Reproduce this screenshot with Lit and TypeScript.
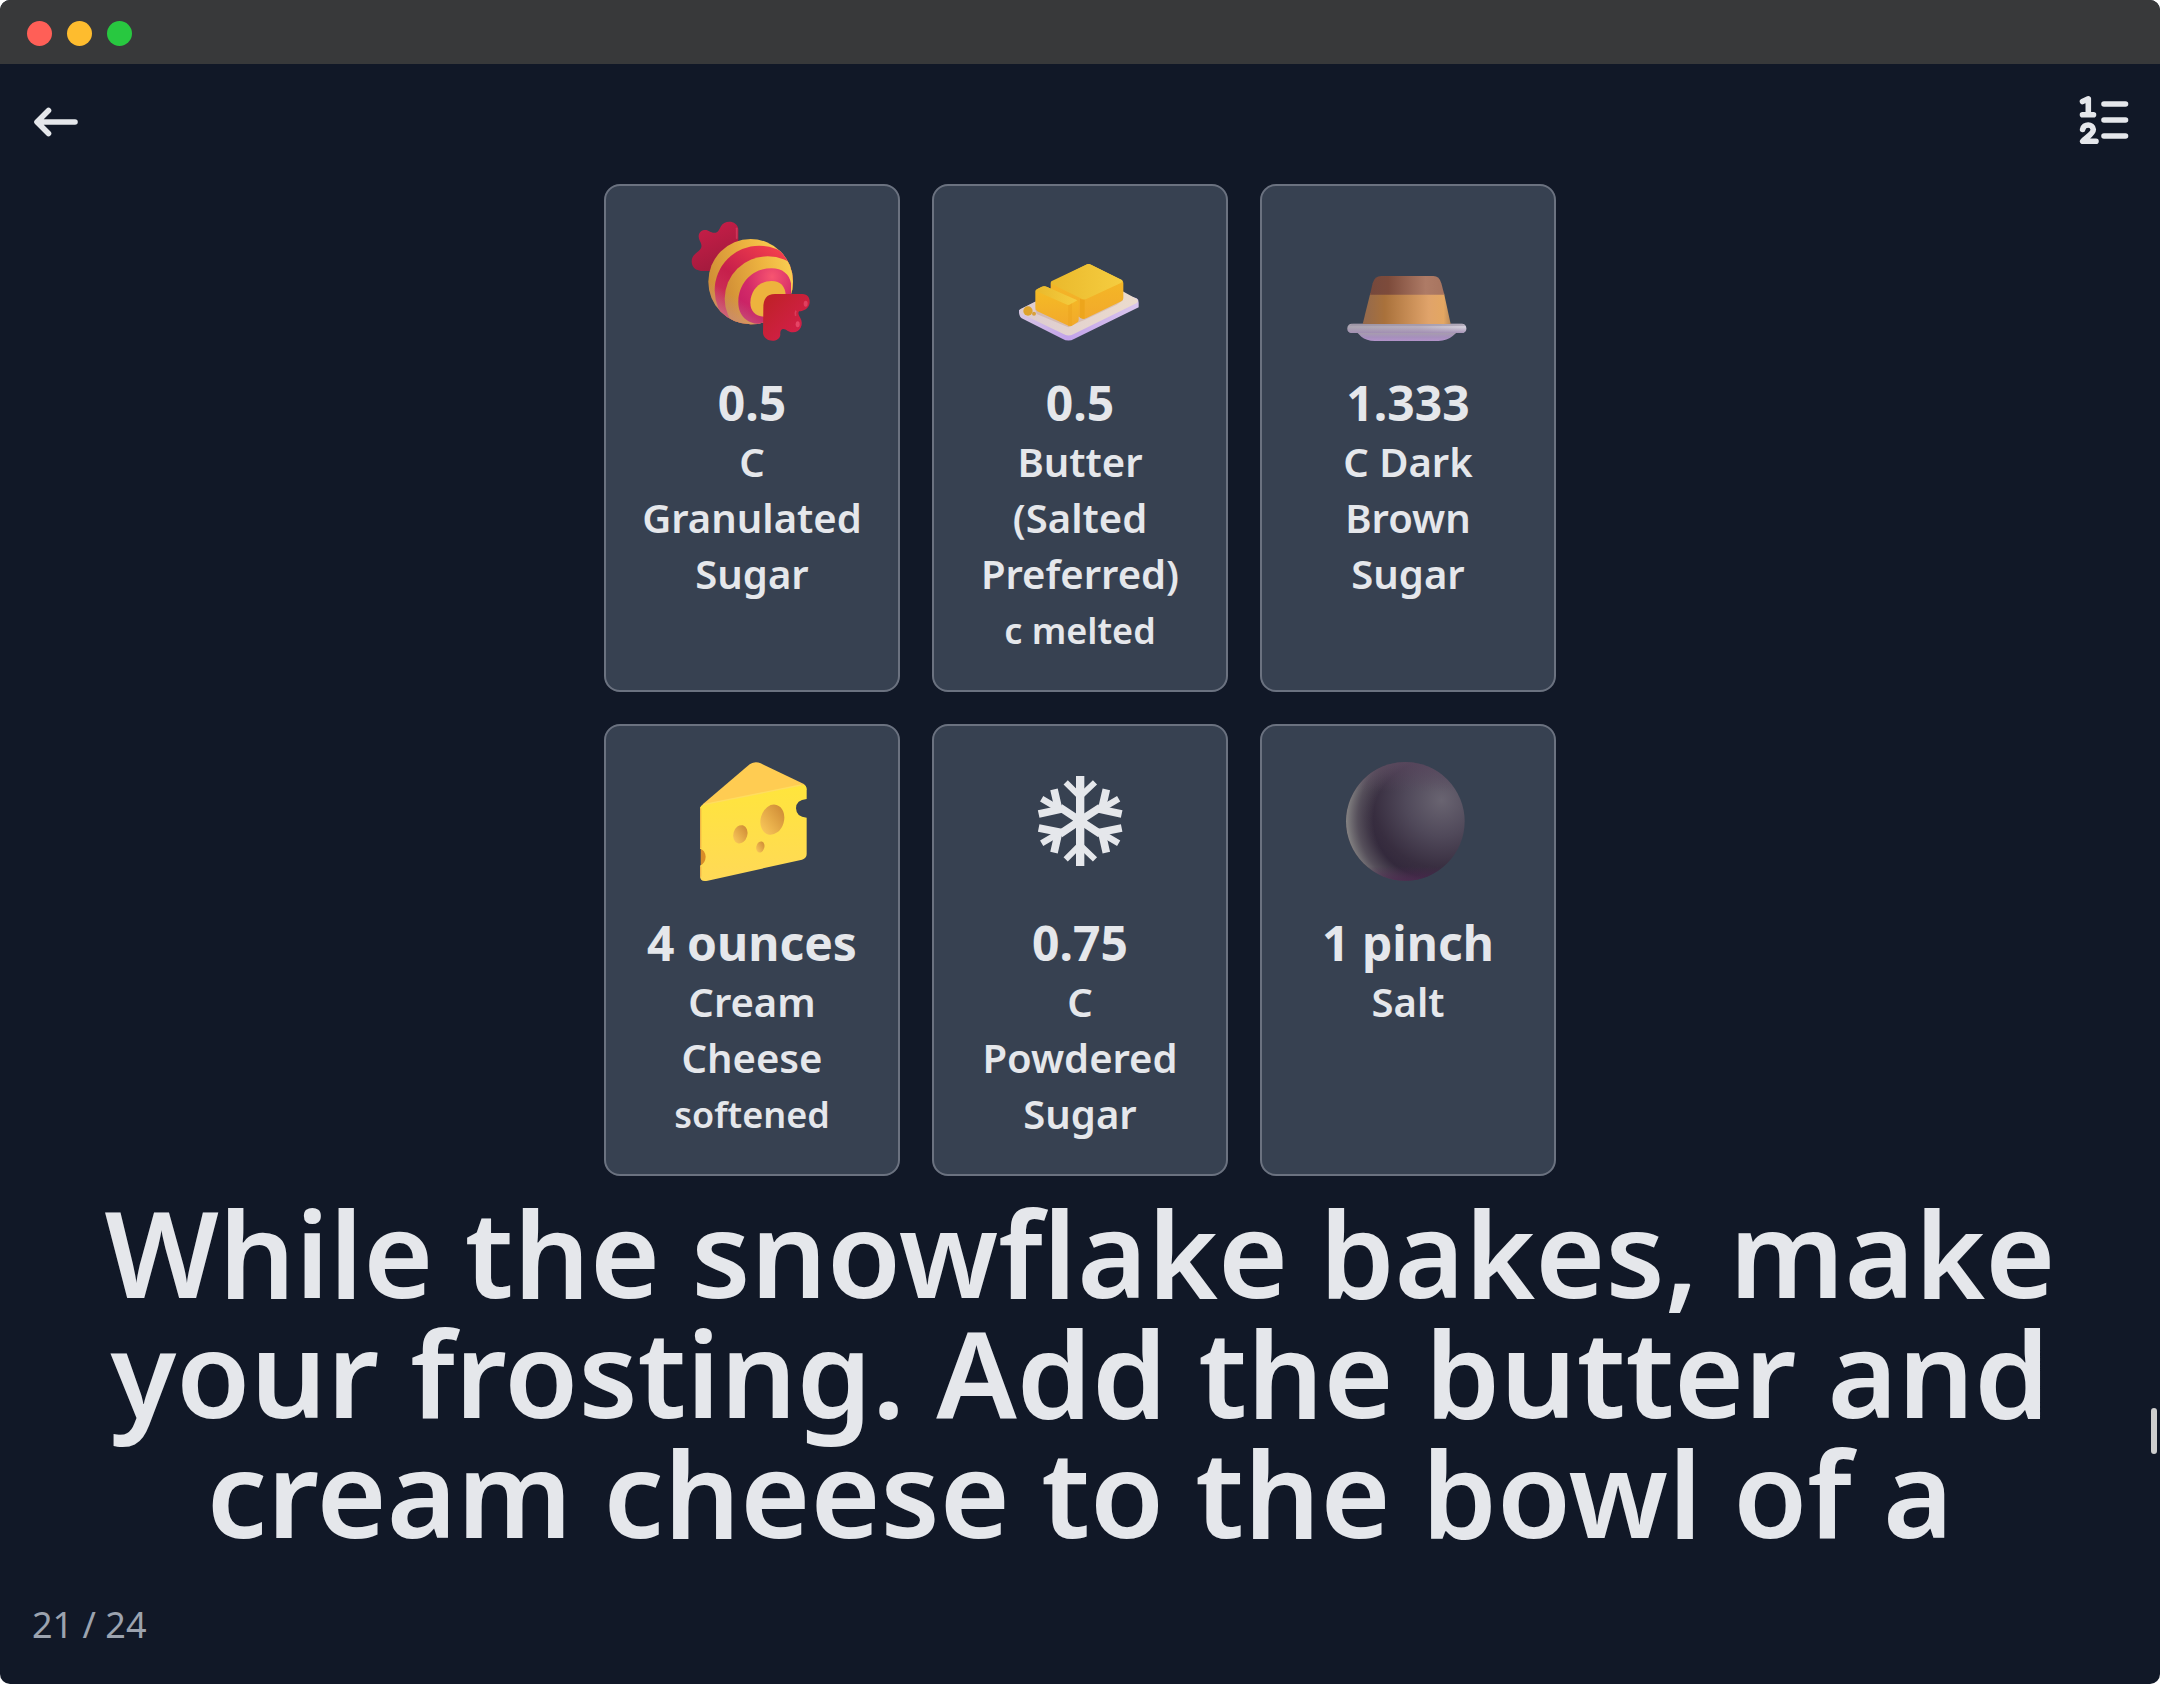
import { html, svg, css, LitElement, TemplateResult, nothing } from 'lit';
import { customElement, property, state } from 'lit/decorators.js';

interface Ingredient {
	icon: string;
	amount: string;
	name: string;
	note?: string;
}

const candy = svg`
	<svg viewBox="66 66 360 360">
		<defs>
			<clipPath id="ball"><ellipse cx="242" cy="245" rx="127" ry="128"/></clipPath>
			<linearGradient id="yellow" x1="0" y1=".5" x2="1" y2=".3">
				<stop offset="0" stop-color="#cf8c36"/><stop offset=".5" stop-color="#eeb440"/><stop offset="1" stop-color="#ffdb5a"/>
			</linearGradient>
			<linearGradient id="red" x1="0" y1="1" x2=".7" y2="0">
				<stop offset="0" stop-color="#d64467"/><stop offset=".55" stop-color="#c61f4b"/><stop offset="1" stop-color="#f5404d"/>
			</linearGradient>
			<radialGradient id="pink" cx=".64" cy=".15" r=".8">
				<stop offset="0" stop-color="#f75570"/><stop offset=".6" stop-color="#d32a68"/><stop offset="1" stop-color="#c72065"/>
			</radialGradient>
			<linearGradient id="tail" x1=".3" y1="0" x2=".7" y2="1">
				<stop offset="0" stop-color="#c81e48"/><stop offset="1" stop-color="#9f1a3c"/>
			</linearGradient>
			<linearGradient id="wrap" x1=".1" y1=".1" x2="1" y2="1">
				<stop offset="0" stop-color="#c02129"/><stop offset="1" stop-color="#d81f52"/>
			</linearGradient>
			<linearGradient id="shade" x1=".2" y1="1" x2=".5" y2=".5">
				<stop offset="0" stop-color="#c88c93" stop-opacity=".75"/><stop offset=".6" stop-color="#c88c93" stop-opacity="0"/>
			</linearGradient>
		</defs>
		<path fill="url(#tail)" d="M205 125V88C202 60 163 58 152 80C147 90 144 98 134 98C121 99 116 88 103 90C86 93 82 110 90 124C97 137 96 144 86 153C72 164 62 172 66 192C70 207 84 213 98 213H125Z"/>
		<path stroke="#e04468" stroke-width="5" stroke-linecap="round" opacity=".6" d="M200 85V115"/>
		<g clip-path="url(#ball)">
			<rect x="110" y="110" width="270" height="270" fill="url(#yellow)"/>
			<circle cx="268" cy="271" r="134" fill="url(#red)"/>
			<ellipse cx="293" cy="296" rx="129" ry="127" fill="url(#yellow)"/>
			<path fill="url(#pink)" d="M205 303C207 246 250 205 304 205C338 205 358 223 363 250V300L290 372C238 378 203 352 205 303Z"/>
			<path fill="#edb33d" d="M241 308C242 270 268 243 305 243C332 243 346 260 347 285L285 350C256 350 241 333 241 308Z"/>
			<rect x="110" y="110" width="270" height="270" fill="url(#shade)"/>
		</g>
		<path fill="url(#wrap)" d="M280 325C280 297 289 282 315 282H395C412 281 420 292 419 308C417 326 401 333 387 334C383 340 386 346 391 354C402 373 391 397 369 397C353 397 349 386 339 387C331 389 331 396 331 404C328 430 283 428 279 400Z"/>
		<ellipse cx="407" cy="311" rx="6" ry="9" fill="#ef5575" opacity=".6"/>
		<ellipse cx="383" cy="373" rx="6" ry="9" fill="#ef5575" opacity=".7"/>
		<path d="M378 332Q374 340 377 348" stroke="#ea5574" stroke-width="5" opacity=".5" fill="none"/>
	</svg>`;

const butter = svg`
	<svg viewBox="60 -54 360 360">
		<defs>
			<linearGradient id="rim" x1="0" y1="0" x2="1" y2="0">
				<stop offset="0" stop-color="#d8c8e4"/><stop offset=".4" stop-color="#c2a2ea"/><stop offset="1" stop-color="#d9c6ec"/>
			</linearGradient>
			<linearGradient id="plate" x1="0" y1="0" x2="1" y2="0">
				<stop offset="0" stop-color="#dccbd0"/><stop offset="1" stop-color="#ecdccd"/>
			</linearGradient>
			<linearGradient id="side" x1="0" y1="0" x2="0" y2="1">
				<stop offset="0" stop-color="#f5bd24"/><stop offset="1" stop-color="#f2a92b"/>
			</linearGradient>
			<linearGradient id="top" x1="0" y1="0" x2="1" y2="0">
				<stop offset="0" stop-color="#eab92c"/><stop offset="1" stop-color="#f5cd40"/>
			</linearGradient>
		</defs>
		<path fill="url(#rim)" d="M57 210L240 120L410 175Q416 178 416 188V202L222 297Q205 307 187 296L65 235Q56 228 57 210Z"/>
		<path fill="url(#plate)" d="M62 207L105 185L368 154L410 177Q418 184 409 190L220 283Q206 290 192 283L64 221Q56 214 62 207Z"/>
		<path fill="#b98a72" opacity=".3" d="M105 206L110 222L205 262L240 245L255 239L350 194L370 180Z"/>
		<path fill="url(#side)" d="M152 128L262 73Q267 70 273 74L366 121Q370 124 370 130V175Q370 181 364 184L260 234Q251 238 242 233L152 190Z"/>
		<path fill="url(#top)" d="M154 124L261 73Q267 70 273 74L366 120Q370 124 364 128L259 177Q252 180 245 176L155 132Q150 128 154 124Z"/>
		<path fill="#eda51c" d="M240 176Q247 180 254 179V237Q247 237 240 233Z"/>
		<path fill="url(#side)" d="M106 152Q108 147 125 140Q132 136 143 142L231 181Q236 184 236 190V240Q236 246 230 248L216 257Q208 260 202 256L112 214Q106 210 106 204Z"/>
		<path fill="url(#top)" d="M109 149L127 140Q134 137 143 142L232 181L209 194Q204 196 198 193L109 154Z"/>
		<path fill="#eda51f" d="M205 195L209 194L216 190V257Q208 260 204 257Z" opacity=".6"/>
		<circle cx="84" cy="213" r="14" fill="#dea32c"/>
		<circle cx="102" cy="221" r="6" fill="#d8a03c"/>
	</svg>`;

const custard = svg`
	<svg viewBox="54 -84 360 360">
		<defs>
			<linearGradient id="caramel" x1="0" y1="0" x2="1" y2="0">
				<stop offset="0" stop-color="#75483c"/><stop offset=".25" stop-color="#7d4b3b"/><stop offset=".75" stop-color="#ae7b66"/><stop offset="1" stop-color="#a7745f"/>
			</linearGradient>
			<linearGradient id="flan" x1="0" y1="0" x2="1" y2="0">
				<stop offset="0" stop-color="#93694e"/><stop offset=".25" stop-color="#a9713b"/><stop offset=".75" stop-color="#e0a36a"/><stop offset=".92" stop-color="#e4a762"/><stop offset="1" stop-color="#b98a5a"/>
			</linearGradient>
			<linearGradient id="dish" x1="0" y1="0" x2="0" y2="1">
				<stop offset="0" stop-color="#8c8592"/><stop offset=".3" stop-color="#a79caf"/><stop offset=".65" stop-color="#a68fbd"/><stop offset="1" stop-color="#b293c9"/>
			</linearGradient>
			<linearGradient id="lip" x1="0" y1="0" x2="1" y2="0">
				<stop offset="0" stop-color="#aaa3b0"/><stop offset=".6" stop-color="#b7adbe"/><stop offset="1" stop-color="#d3cedb"/>
			</linearGradient>
			<linearGradient id="under" x1="0" y1="0" x2="0" y2="1">
				<stop offset=".4" stop-color="#a08cb2" stop-opacity="0"/><stop offset="1" stop-color="#a08cb2" stop-opacity=".9"/>
			</linearGradient>
		</defs>
		<path fill="url(#dish)" d="M75 240H388Q378 250 368 258Q352 272 325 273H135Q108 272 94 260Q84 251 75 240Z"/>
		<rect x="52" y="221" width="357" height="28" rx="13" fill="url(#lip)"/>
		<rect x="52" y="221" width="357" height="28" rx="13" fill="url(#under)"/>
		<path fill="#8f8499" opacity=".45" d="M58 227Q64 221 70 221H395Q402 221 406 228Z"/>
		<path fill="url(#flan)" d="M121 130H342L362 222H98Z"/>
		<path fill="url(#caramel)" d="M120 134L128 100Q134 78 154 78H310Q328 78 334 100L343 134Z"/>
	</svg>`;

const cheese = svg`
	<svg viewBox="36 66 360 360">
		<defs>
			<linearGradient id="rind" x1="0" y1="0" x2="0" y2="1">
				<stop offset="0" stop-color="#ffe53c"/><stop offset="1" stop-color="#ffd957"/>
			</linearGradient>
			<linearGradient id="hole" x1=".8" y1="0" x2=".2" y2="1">
				<stop offset="0" stop-color="#ce8a35"/><stop offset="1" stop-color="#fac85a"/>
			</linearGradient>
		</defs>
		<path fill="#d98d28" d="M62 320Q86 325 88 350Q87 370 62 380Z"/>
		<path fill="#ffcc52" d="M60 205Q62 198 70 191L209 73Q225 62 242 70L370 131Q380 136 379 150L65 208Z"/>
		<path fill="url(#rind)" d="M60 207Q60 196 75 193L361 135Q379 131 380 148V177Q348 180 348 205Q349 232 380 233V342Q380 355 366 359L83 422Q60 427 60 408V377Q76 370 77 350Q75 329 60 326Z"/>
		<path stroke="#ffdc5f" stroke-width="4" fill="none" d="M70 194L363 135"/>
		<path stroke="#e9a545" stroke-width="4" fill="none" opacity=".7" d="M62 205V325M62 379V410"/>
		<ellipse cx="277" cy="239" rx="35" ry="46" transform="rotate(16 277 239)" fill="url(#hole)"/>
		<ellipse cx="181" cy="283" rx="21" ry="28" transform="rotate(16 181 283)" fill="url(#hole)"/>
		<ellipse cx="241" cy="321" rx="12" ry="17" transform="rotate(16 241 321)" fill="url(#hole)"/>
	</svg>`;

const snowflake = svg`
	<svg viewBox="30 36 360 360">
		<g stroke="#e5e7eb" fill="none">
			<path stroke-width="25" d="M210.500 78V348"/>
			<path stroke-width="18" d="M167 97L210 140L255 97M167 328L210 285L255 328"/>
			<path stroke-width="23" d="M150 172L210 212M271 172L210 212M150 252L210 212M271 252L210 212"/>
			<path stroke-width="23" d="M132 118L146 179L86 192M289 118L275 179L335 192M132 308L146 246L86 234M289 308L275 246L335 234"/>
			<path stroke-width="19" d="M95 146L146 176M326 146L275 176M95 280L146 250M326 280L275 250"/>
		</g>
	</svg>`;

const pepper = svg`
	<svg viewBox="54 66 360 360">
		<defs>
			<radialGradient id="dark" gradientUnits="userSpaceOnUse" cx="335" cy="180" r="240">
				<stop offset="0" stop-color="#696471"/><stop offset=".45" stop-color="#50495a"/><stop offset=".85" stop-color="#382e40"/><stop offset="1" stop-color="#33293c"/>
			</radialGradient>
			<radialGradient id="edge" gradientUnits="userSpaceOnUse" cx="305" cy="238" r="257">
				<stop offset=".68" stop-color="#777478" stop-opacity="0"/><stop offset=".86" stop-color="#777478" stop-opacity=".5"/><stop offset="1" stop-color="#858484"/>
			</radialGradient>
			<linearGradient id="glow" x1="0" y1="0" x2="0" y2="1">
				<stop offset="0" stop-color="#5c4860" stop-opacity=".7"/><stop offset=".25" stop-color="#5c4860" stop-opacity="0"/>
				<stop offset=".88" stop-color="#4d2850" stop-opacity="0"/><stop offset="1" stop-color="#4d2850" stop-opacity=".8"/>
			</linearGradient>
		</defs>
		<circle cx="226" cy="244" r="178" fill="url(#dark)"/>
		<circle cx="226" cy="244" r="178" fill="url(#edge)"/>
		<circle cx="226" cy="244" r="178" fill="url(#glow)"/>
	</svg>`;

const pictures: Record<string, TemplateResult<2>> = { candy, butter, custard, cheese, snowflake, pepper };

@customElement('ingredient-card')
export class IngredientCard extends LitElement {
	static styles = css`
		:host {
			display: block;
			box-sizing: border-box;
			padding: 36px 24px 32px;
			border: 2px solid #6b7280;
			border-radius: 16px;
			background: #374151;
			text-align: center;
		}
		.picture {
			height: 148px;
		}
		.picture svg {
			display: block;
			width: 120px;
			height: 120px;
			margin: 0 auto;
			overflow: visible;
		}
		.amount {
			height: 64px;
			font-size: 48px;
			line-height: 66px;
			font-weight: 700;
		}
		.name {
			padding: 0 12px;
			font-size: 40px;
			line-height: 56px;
			font-weight: 600;
		}
		.note {
			height: 56px;
			font-size: 36px;
			line-height: 58px;
			font-weight: 600;
		}
	`;

	@property({ type: Object }) item!: Ingredient;

	render() {
		const { icon, amount, name, note } = this.item;
		return html`
			<div class="picture">${pictures[icon]}</div>
			<div class="amount">${amount}</div>
			<div class="name">${name}</div>
			${note ? html`<div class="note">${note}</div>` : nothing}
		`;
	}
}

@customElement('app-root')
export class AppRoot extends LitElement {
	static styles = css`
		:host {
			display: block;
			height: 100vh;
			background: #fff;
			color: #e5e7eb;
			font-family: "Noto Sans", sans-serif;
		}
		.window {
			position: relative;
			display: flex;
			flex-direction: column;
			height: 100%;
			border-radius: 10px;
			overflow: hidden;
			background: #111827;
		}
		.titlebar {
			flex: none;
			display: flex;
			align-items: center;
			gap: 15px;
			box-sizing: border-box;
			height: 64px;
			padding: 3px 27px 0;
			background: #38393a;
		}
		.light {
			width: 25px;
			height: 25px;
			border-radius: 50%;
		}
		.close { background: #ff5f57; }
		.minimize { background: #febc2e; }
		.zoom { background: #28c840; }
		.toolbar {
			flex: none;
			display: flex;
			justify-content: space-between;
			height: 96px;
			padding: 24px 24px 0;
		}
		.toolbar svg {
			width: 64px;
			height: 64px;
			fill: none;
			stroke: #e5e7eb;
			stroke-width: 5.6;
			stroke-linecap: round;
			stroke-linejoin: round;
		}
		.step {
			flex: none;
			height: 1368px;
		}
		.ingredients {
			display: grid;
			grid-template-columns: repeat(3, 296px);
			justify-content: center;
			gap: 32px;
		}
		.text {
			margin: 16px 0 0;
			padding: 0 96px;
			font-size: 120px;
			line-height: 120px;
			font-weight: 600;
			text-align: center;
		}
		.progress {
			padding: 48px 32px 0;
			font-size: 36px;
			line-height: 50px;
			color: #9ca3af;
		}
		.thumb {
			position: absolute;
			right: 3px;
			top: 1408px;
			width: 6px;
			height: 46px;
			border-radius: 3px;
			background: #cdcdcd;
		}
	`;

	@state() private current = 21;
	@state() private total = 24;

	private ingredients: Ingredient[] = [
		{ icon: 'candy', amount: '0.5', name: 'C Granulated Sugar' },
		{ icon: 'butter', amount: '0.5', name: 'Butter (Salted Preferred)', note: 'c melted' },
		{ icon: 'custard', amount: '1.333', name: 'C Dark Brown Sugar' },
		{ icon: 'cheese', amount: '4 ounces', name: 'Cream Cheese', note: 'softened' },
		{ icon: 'snowflake', amount: '0.75', name: 'C Powdered Sugar' },
		{ icon: 'pepper', amount: '1 pinch', name: 'Salt' },
	];

	render() {
		return html`
			<div class="window">
				<div class="titlebar">
					<span class="light close"></span>
					<span class="light minimize"></span>
					<span class="light zoom"></span>
				</div>
				<div class="toolbar">
					<svg viewBox="24 88 64 64"><path d="M75 122H37.500M48.500 110.500L37 122L48.500 133.500"/></svg>
					<svg viewBox="2072 88 64 64">
						<path d="M2104 104H2125.500M2104 120H2125.500M2104 136H2125.500"/>
						<path d="M2082.500 101.500L2088.300 98.800V114.500M2082.500 114.700H2093.500"/>
						<path d="M2082.600 129.500C2083.500 123.500 2093 123.500 2093.300 129.500C2093.300 134 2086 137.500 2082.700 141.300H2096"/>
					</svg>
				</div>
				<div class="step">
					<div class="ingredients">
						${this.ingredients.map((item) => html`<ingredient-card .item=${item}></ingredient-card>`)}
					</div>
					<p class="text">While the snowflake bakes, make your frosting. Add the butter and cream cheese to the bowl of a</p>
				</div>
				<div class="progress">${this.current} / ${this.total}</div>
				<div class="thumb"></div>
			</div>
		`;
	}
}
